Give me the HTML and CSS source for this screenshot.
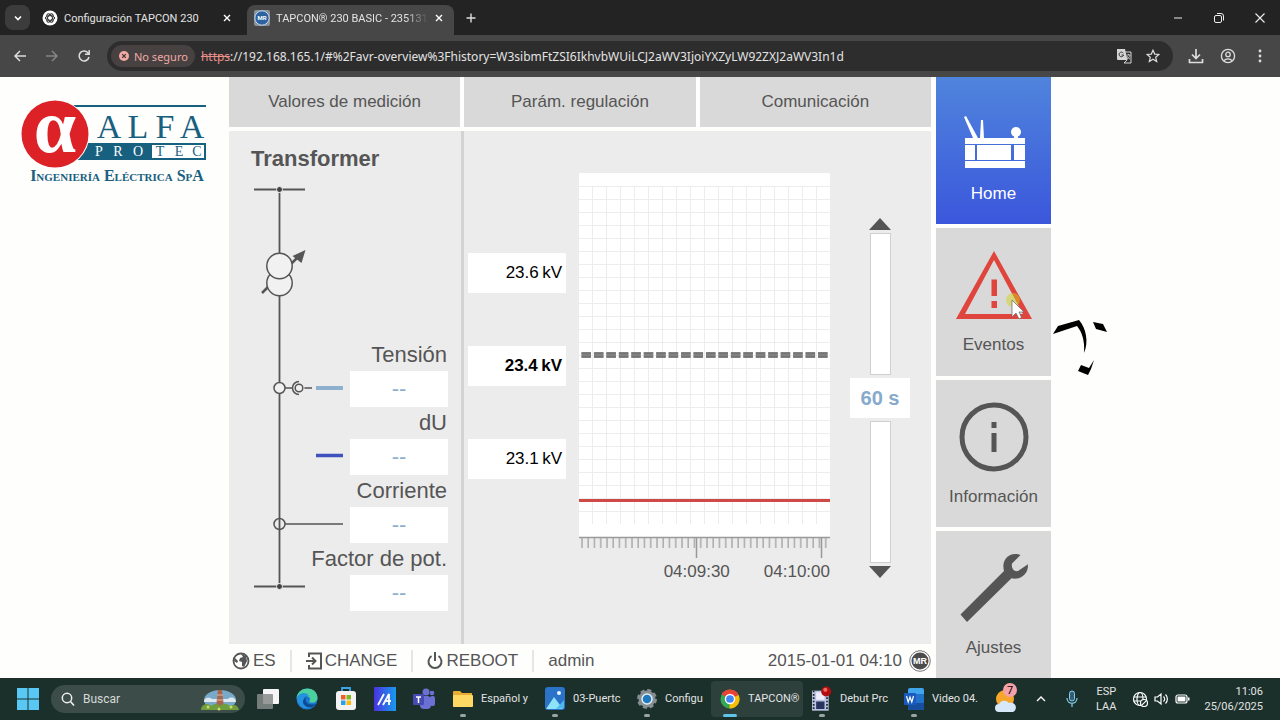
FILE: index.html
```html
<!DOCTYPE html>
<html lang="es">
<head>
<meta charset="utf-8">
<meta name="viewport" content="width=device-width, initial-scale=1">
<title>TAPCON 230 BASIC</title>
<link rel="stylesheet" href="styles.css">
</head>
<body>
<header class="browser">
<div class="tabstrip">
<button class="tabsearch" aria-label="Buscar pestañas"><svg width="10" height="10" viewBox="0 0 10 10"><path d="M2 3.5l3 3 3-3" fill="none" stroke="#fff" stroke-width="1.6"/></svg></button>
<div class="tab">
<svg width="16" height="16" viewBox="0 0 16 16"><circle cx="8" cy="8" r="7.5" fill="#fff"/><g fill="none" stroke="#333" stroke-width="1"><ellipse cx="8" cy="8" rx="4.6" ry="2.3"/><ellipse cx="8" cy="8" rx="4.6" ry="2.3" transform="rotate(60 8 8)"/><ellipse cx="8" cy="8" rx="4.6" ry="2.3" transform="rotate(120 8 8)"/></g></svg>
<span class="tabname">Configuración TAPCON 230</span>
<button aria-label="Cerrar"><svg width="10" height="10" viewBox="0 0 10 10"><path d="M2 2l6 6M8 2l-6 6" stroke="#fff" stroke-width="1.4"/></svg></button>
</div>
<div class="tab active">
<svg width="16" height="16" viewBox="0 0 16 16"><rect width="16" height="16" rx="2" fill="#8b9299"/><circle cx="8" cy="8" r="7.2" fill="#2d62a0" stroke="#c6d9ec"/><text x="8" y="10" text-anchor="middle" class="favtext">MR</text></svg>
<span class="tabname">TAPCON® 230 BASIC - 235131</span>
<button aria-label="Cerrar"><svg width="10" height="10" viewBox="0 0 10 10"><path d="M2 2l6 6M8 2l-6 6" stroke="#fff" stroke-width="1.4"/></svg></button>
</div>
<button class="newtab" aria-label="Nueva pestaña"><svg width="12" height="12" viewBox="0 0 12 12"><path d="M6 1.5v9M1.5 6h9" stroke="#ddd" stroke-width="1.4"/></svg></button>
<div class="winbuttons">
<button aria-label="Minimizar"><svg width="12" height="12" viewBox="0 0 12 12"><path d="M2 6h8" stroke="#eee"/></svg></button>
<button aria-label="Restaurar"><svg width="12" height="12" viewBox="0 0 12 12"><g fill="none" stroke="#eee"><rect x="1.5" y="3.5" width="7" height="7" rx="1.5"/><path d="M4 1.5h4a2.5 2.5 0 0 1 2.5 2.5v4.5"/></g></svg></button>
<button aria-label="Cerrar ventana"><svg width="12" height="12" viewBox="0 0 12 12"><path d="M1.5 1.5l9 9M10.5 1.5l-9 9" stroke="#eee" stroke-width="1.1"/></svg></button>
</div>
</div>
<div class="toolbar">
<button aria-label="Atrás"><svg width="14" height="14" viewBox="0 0 14 14"><path d="M13 7H2M7 2L2 7l5 5" fill="none" stroke="#ddd" stroke-width="1.5"/></svg></button>
<button aria-label="Adelante"><svg width="14" height="14" viewBox="0 0 14 14"><path d="M1 7h11M7 2l5 5-5 5" fill="none" stroke="#858585" stroke-width="1.5"/></svg></button>
<button aria-label="Recargar"><svg width="14" height="14" viewBox="0 0 14 14"><path d="M11.5 4.500A5 5 0 1 0 12 8M12.200 1v4.200H8" fill="none" stroke="#ddd" stroke-width="1.5"/></svg></button>
<div class="omnibox">
<span class="unsafe"><svg width="10" height="10" viewBox="0 0 10 10"><circle cx="5" cy="5" r="5" fill="#f0aaa4"/><path d="M3.2 3.2l3.6 3.6M6.8 3.2L3.2 6.8" stroke="#40302f" stroke-width="1.2"/></svg>No seguro</span>
<s>https</s><input type="text" aria-label="Dirección" value="://192.168.165.1/#%2Favr-overview%3Fhistory=W3sibmFtZSI6IkhvbWUiLCJ2aWV3IjoiYXZyLW92ZXJ2aWV3In1d">
<button aria-label="Traducir"><svg width="16" height="16" viewBox="0 0 16 16"><path d="M1 1h8l2.5 11H2a1 1 0 0 1-1-1z" fill="#d5d5d5"/><path d="M9.5 4H15v11H8l3-3" fill="none" stroke="#d5d5d5"/><path d="M7.3 5.2A2.3 2.3 0 1 0 7.6 7H5.5" fill="none" stroke="#333"/><path d="M10.5 7h4M12.5 6v1M14 7c-.5 2-1.5 3-3 4M11 8c.5 1.5 1.5 2.5 3 3" fill="none" stroke="#d5d5d5" stroke-width=".8"/></svg></button>
<button aria-label="Favorito"><svg width="14" height="14" viewBox="0 0 14 14"><path d="M7 1.2l1.7 3.9 4.2.4-3.2 2.8 1 4.2L7 10.3l-3.7 2.2 1-4.2L1.1 5.500l4.200-.4z" fill="none" stroke="#ddd" stroke-width="1.2"/></svg></button>
</div>
<button aria-label="Descargas"><svg width="16" height="16" viewBox="0 0 16 16"><path d="M8 1v9M4 6.5l4 4 4-4M1.5 11v3.5h13V11" fill="none" stroke="#ddd" stroke-width="1.7"/></svg></button>
<button aria-label="Perfil"><svg width="16" height="16" viewBox="0 0 16 16"><g fill="none" stroke="#ddd" stroke-width="1.3"><circle cx="8" cy="8" r="6.6"/><circle cx="8" cy="6.4" r="2.2"/><path d="M3.8 12.8c2-2.5 6.4-2.5 8.400 0"/></g></svg></button>
<button aria-label="Menú"><svg width="16" height="16" viewBox="0 0 16 16"><g fill="#ddd"><circle cx="8" cy="3" r="1.4"/><circle cx="8" cy="8" r="1.4"/><circle cx="8" cy="13" r="1.4"/></g></svg></button>
</div>
</header>

<main class="page">
<aside class="brand">
<svg class="logo" width="190" height="90" viewBox="18 96 190 90" role="img" aria-label="Alfa Protec Ingeniería Eléctrica SpA">
<path d="M70 106H206" stroke="#17607f" stroke-width="2"/>
<rect x="70" y="143" width="136" height="17" fill="#17607f"/>
<rect x="152" y="145" width="52" height="13" fill="#fff"/>
<circle cx="55" cy="134" r="34.5" fill="#fff"/>
<circle cx="55" cy="134" r="33.5" fill="#dc2127"/>
<text x="55" y="152" class="alpha">α</text>
<g class="alfa"><text x="109" y="138">A</text><text x="138" y="138">L</text><text x="165" y="138">F</text><text x="192" y="138">A</text></g>
<g class="pro"><text x="99" y="156">P</text><text x="118" y="156">R</text><text x="138" y="156">O</text></g>
<g class="tec"><text x="160" y="156">T</text><text x="179" y="156">E</text><text x="197" y="156">C</text></g>
<text x="117" y="181" class="slogan">Ingeniería Eléctrica SpA</text>
</svg>
</aside>

<div class="app">
<section class="visu">
<nav class="topnav">
<a href="#medicion">Valores de medición</a>
<a href="#regulacion">Parám. regulación</a>
<a href="#comunicacion">Comunicación</a>
</nav>
<div class="panels">
<div class="transformer">
<h1>Transformer</h1>
<div class="scheme">
<svg class="line" width="96" height="438" viewBox="250 173 96 438">
<g fill="none" stroke="#555" stroke-width="1.8">
<path d="M254 189.5h51M254 586.5h51"/>
<path d="M279.5 193v390"/>
<path d="M262 293l36-36" stroke-width="2.5"/>
</g>
<circle cx="279.5" cy="189.5" r="3" fill="#444" stroke="#ececec"/>
<circle cx="279.5" cy="586.5" r="3" fill="#444" stroke="#ececec"/>
<path d="M305.5 250l-4 13-9-7z" fill="#555"/>
<g fill="#f1f1f1" stroke="#555" stroke-width="1.5">
<circle cx="279.5" cy="283" r="12.7"/>
<circle cx="279.5" cy="266" r="12.7"/>
<path d="M285 388h27"/>
<circle cx="279.5" cy="388" r="5.5"/>
<circle cx="298.5" cy="388" r="6" fill="#ececec" stroke="none"/>
<path d="M299 381.5a6.5 6.5 0 0 0 0 13" fill="none"/>
<circle cx="299" cy="388" r="3.8"/>
<path d="M285 524h58"/>
<circle cx="279.5" cy="524" r="5.5" fill="none"/>
</g>
<path d="M316 388h27" stroke="#8cb0cd" stroke-width="4"/>
<path d="M316 455.5h27" stroke="#3e52bf" stroke-width="3.5"/>
</svg>
<dl class="readings">
<dt>Tensión</dt><dd>--</dd>
<dt>dU</dt><dd>--</dd>
<dt>Corriente</dt><dd>--</dd>
<dt>Factor de pot.</dt><dd>--</dd>
</dl>
</div>
</div>
<div class="trend">
<div class="levels">
<output>23.6&thinsp;kV</output>
<output class="target">23.4&thinsp;kV</output>
<output>23.1&thinsp;kV</output>
</div>
<div class="chart">
<svg viewBox="0 0 251 386">
<defs>
<pattern id="mesh" x="13" width="14" height="13" patternUnits="userSpaceOnUse"><path d="M.5 0v13M0 .5h14" stroke="#ededed" stroke-width="1"/></pattern>
<pattern id="ticks" x="2" width="6.25" height="10" patternUnits="userSpaceOnUse"><path d="M1 0v10" stroke="#aaa" stroke-width="1.5"/></pattern>
</defs>
<rect width="251" height="364" fill="#fff"/>
<rect y="13" width="251" height="338" fill="url(#mesh)"/>
<path d="M2.5 182h247" stroke="#8f8f8f" stroke-width="6" stroke-dasharray="9.5 2.95"/>
<path d="M2.5 180.500h247M2.5 183.5h247" stroke="#757575" stroke-width="2" stroke-dasharray="9.5 2.95"/>
<path d="M0 327.5h251" stroke="#cf4a46" stroke-width="3"/>
<path d="M0 364.5h251M117.5 364v21M242.5 364v21" stroke="#999" stroke-width="1.5" fill="none"/>
<rect y="365" width="251" height="10" fill="url(#ticks)"/>
</svg>
<div class="times"><span>04:09:30</span><span>04:10:00</span></div>
</div>
<div class="zoom">
<button aria-label="Ampliar"><svg width="22" height="12" viewBox="0 0 22 12"><path d="M0 12L11 0l11 12z" fill="#555"/></svg></button>
<div class="track"></div>
<output>60 s</output>
<div class="track"></div>
<button aria-label="Reducir"><svg width="22" height="12" viewBox="0 0 22 12"><path d="M0 0l11 12L22 0z" fill="#555"/></svg></button>
</div>
</div>
</div>
<footer class="status">
<button><svg width="18" height="18" viewBox="0 0 18 18"><circle cx="9" cy="9" r="7.5" fill="none" stroke="#555" stroke-width="1.8"/><path d="M9 2l5 2 1 5-3 6-2-1V10L7 9l1-3 3-1z" fill="#555"/><path d="M3 6l3 3-1 2-3-2z" fill="#555"/></svg>ES</button>
<button><svg width="16" height="18" viewBox="0 0 16 18"><path d="M3 5V1.5h12v15H3V13M0 9h9M6 5.5L9.500 9 6 12.500" fill="none" stroke="#555" stroke-width="2"/></svg>CHANGE</button>
<button><svg width="16" height="18" viewBox="0 0 16 18"><path d="M4.500 4a6.500 6.500 0 1 0 7 0M8 0v9" fill="none" stroke="#555" stroke-width="2"/></svg>REBOOT</button>
<span class="user">admin</span>
<time>2015-01-01 04:10</time>
<svg width="22" height="22" viewBox="0 0 22 22"><circle cx="11" cy="11" r="10.3" fill="#fff" stroke="#777"/><circle cx="11" cy="11" r="8.5" fill="#4c4c4c"/><text x="11" y="14" text-anchor="middle" class="mr">MR</text></svg>
</footer>
</section>

<nav class="sidenav">
<a href="#home" class="current"><svg width="80" height="80" viewBox="0 0 80 80"><g fill="#fff"><path d="M10 7l2-1 12 22h-5z"/><path d="M27 10h2l1 18h-4z"/><circle cx="62" cy="22" r="5"/><path d="M60 25h4v5h-4z"/><rect x="11" y="28" width="60" height="6"/><rect x="11" y="35" width="10" height="15"/><rect x="23" y="35" width="34" height="15"/><rect x="60" y="35" width="11" height="15"/><rect x="11" y="51" width="60" height="7"/></g></svg>Home</a>
<a href="#eventos"><svg width="80" height="80" viewBox="0 0 80 80"><path d="M40-4L2 64h76zM40 5L69 59H11z" fill="#df453c" fill-rule="evenodd"/><path d="M37.500 24.500H43V41h-5.500zM37.500 46H43v7h-5.500z" fill="#df453c"/></svg>Eventos
<span class="pointer"><svg width="24" height="30" viewBox="0 0 24 30"><circle cx="9" cy="8" r="7" fill="#d4d21c" opacity=".5"/><path d="M8 8v17l4-4 3 6 2.500-1.500-2.500-5.500h5z" fill="#fff" stroke="#666" stroke-width=".7"/></svg></span></a>
<a href="#informacion"><svg width="80" height="80" viewBox="0 0 80 80"><circle cx="40" cy="30" r="32" fill="none" stroke="#555" stroke-width="5"/><path d="M37.500 15h5v6h-5zM37.500 26h5v19h-5z" fill="#555"/></svg>Información</a>
<a href="#ajustes"><svg width="80" height="80" viewBox="0 0 80 80"><path d="M50 13C49 8 49 5 51.500 1 55-4 61-5 66.500-3L58 5.500c-1 4.500 2 8.500 6 7.500l10-6.700c0 4.700-1 7.700-3 9.700-3 4-9 5.500-13.500 4.300L13 64l-6.500-7.500z" fill="#555"/></svg>Ajustes</a>
</nav>
<svg class="sketch" width="58" height="58" viewBox="1052 319 58 58"><path d="M1053 334l5-8 21-6c7 8 10 22 5 33 1-12-2-21-7-27z"/><path d="M1093 322l10 2 4 8-11-3zM1081 365l8 3 5-8-3 9-3 6-10-4z"/></svg>
</div>
</main>

<footer class="taskbar">
<button class="start" aria-label="Inicio"><svg width="22" height="22" viewBox="0 0 22 22"><path d="M0 0h10.500v10.500H0zM11.500 0H22v10.500H11.500zM0 11.500h10.500V22H0zM11.500 11.500H22V22H11.500z" fill="#5ac8f5"/></svg></button>
<label class="search"><svg width="14" height="14" viewBox="0 0 14 14"><path d="M9.500 9.500L13 13.500" stroke="#eee" stroke-width="1.6"/><circle cx="6" cy="6" r="4.7" fill="none" stroke="#eee" stroke-width="1.5"/></svg>
<input type="text" placeholder="Buscar">
<svg width="40" height="28" viewBox="0 0 40 28"><ellipse cx="20" cy="15" rx="16" ry="10" fill="#79a9c8"/><path d="M4 17c0-5 6-5 8-3h16c3-3 8-1 8 3z" fill="#dfe9ef"/><path d="M16 23l2-18h4l2 18z" fill="#a7654e"/><path d="M17 10h6M16 15h8" stroke="#e1b6a0"/><path d="M1 25c0-6 7-8 10-4 4-3 7-2 9 0 3-3 7-3 9 0 5-2 9-1 10 4z" fill="#6f9e3c"/><g fill="#cfd86a"><circle cx="8" cy="22" r="1.5"/><circle cx="19" cy="24" r="1.5"/><circle cx="31" cy="22" r="1.5"/></g></svg></label>
<div class="pinned">
<button aria-label="Vista de tareas"><svg width="22" height="22" viewBox="0 0 22 22"><rect x="6" y="1" width="16" height="15" rx="1" fill="#f5f5f5"/><rect y="6" width="16" height="15" rx="1" fill="#858b89" opacity=".85"/></svg></button>
<button aria-label="Edge"><svg width="22" height="22" viewBox="0 0 22 22"><circle cx="11" cy="11" r="10.5" fill="#1a78cf"/><path d="M.5 10C2-2 20-3 21.500 9c.5 5-5 7-8.500 5 2-3 1-6-3-6-5 0-8 2-9.500 2z" fill="#4bd0a0"/><path d="M1 9c3-5 10-5 12-1-4-1-6 2-5 6 1 3 4 5 7 5-7 4-15-2-14-10z" fill="#2492df"/><path d="M10 9c-2 5 2 9 10 7-4 6-13 3-13-2 0-2 1-4 3-5z" fill="#0d4a96"/></svg></button>
<button aria-label="Store"><svg width="22" height="24" viewBox="0 0 22 24"><path d="M7 6V1h8v5" fill="none" stroke="#3aa5e8" stroke-width="1.8"/><rect x="1" y="4" width="20" height="19" rx="3" fill="#f3f3f3"/><path d="M6 8h4.500v4.500H6z" fill="#f15a2a"/><path d="M11.500 8H16v4.500h-4.500z" fill="#7dba1f"/><path d="M6 13.500h4.500V18H6z" fill="#2aa2e8"/><path d="M11.500 13.500H16V18h-4.500z" fill="#fcb813"/></svg></button>
<button aria-label="MyASUS"><svg width="22" height="24" viewBox="0 0 22 24"><defs><linearGradient id="asus" x2="1"><stop stop-color="#4a32e0"/><stop offset="1" stop-color="#189bee"/></linearGradient></defs><rect width="22" height="24" fill="url(#asus)"/><path d="M4 18L10 7M9 18l6-11v11M12 14h5" stroke="#fff" stroke-width="1.8" fill="none"/></svg></button>
<button aria-label="Teams"><svg width="22" height="22" viewBox="0 0 22 22"><g fill="#6b71d2"><circle cx="13" cy="4" r="3.5"/><circle cx="19" cy="5" r="2.3"/><rect x="7" y="8" width="11" height="13" rx="4"/><rect x="17" y="8" width="5" height="10" rx="2"/></g><rect y="6" width="11" height="11" rx="1" fill="#454bb0"/><path d="M3 9h5M5.500 9v6" stroke="#fff" stroke-width="1.5"/></svg></button>
</div>
<div class="running">
<button><svg width="20" height="20" viewBox="0 0 20 20"><path d="M0 3a1 1 0 0 1 1-1h6l2 2h10v14H1a1 1 0 0 1-1-1z" fill="#e9ac32"/><rect y="6" width="20" height="12" rx="1" fill="#ffd763"/></svg><span>Español y</span></button>
<button><svg width="20" height="24" viewBox="0 0 20 24"><rect width="20" height="23" rx="3" fill="#2b72c9"/><path d="M1 22l8-12 9 12z" fill="#8ce3fa"/><path d="M11 22l8-9v8z" fill="#4db8ee"/><circle cx="14" cy="6" r="2" fill="#eaf8ff"/></svg><span>03-Puertc</span></button>
<button class="short"><svg width="20" height="22" viewBox="0 0 20 22"><circle cx="10" cy="11" r="8.5" fill="#858e93" stroke="#858e93" stroke-width="3" stroke-dasharray="4 2.67"/><circle cx="10" cy="11" r="5" fill="#1d79c0" stroke="#e7edf0" stroke-width="1.5"/></svg><span>Configu</span></button>
<button class="active"><svg width="22" height="22" viewBox="0 0 22 22"><circle cx="11" cy="11" r="10.5" fill="#34a853"/><path d="M11 11L1.900 5.800A10.500 10.500 0 0 1 20.500 6.500z" fill="#ea4335"/><path d="M11 11l9.500-4.500A10.500 10.500 0 0 1 10.500 21.500z" fill="#fbbc05"/><circle cx="11" cy="11" r="5" fill="#4285f4" stroke="#fff" stroke-width="1.5"/></svg><span>TAPCON®</span></button>
<button><svg width="24" height="30" viewBox="0 0 24 30"><rect x="0" y="5" width="20" height="24" fill="#b9c4e3"/><path d="M2 5v24M18 5v24" stroke="#222" stroke-width="2" stroke-dasharray="2 2"/><rect x="5" y="7" width="10" height="9" fill="#eef"/><rect x="5" y="18" width="10" height="9" fill="#27345c"/><circle cx="17" cy="6" r="6" fill="#b30d10"/><circle cx="16" cy="4" r="2.5" fill="#ef6a62"/></svg><span>Debut Prc</span></button>
<button><svg width="20" height="22" viewBox="0 0 20 22"><rect x="4" width="16" height="22" rx="2" fill="#41a5ee"/><path d="M4 6h16v10H4z" fill="#2372c9"/><path d="M4 15h16v5a2 2 0 0 1-2 2H6a2 2 0 0 1-2-2z" fill="#164f9e"/><rect y="5" width="12" height="12" rx="1" fill="#185abd"/><path d="M2.500 8l1.700 6L6 9l1.800 5 1.700-6" stroke="#fff" stroke-width="1.2" fill="none"/></svg><span>Video 04.</span></button>
</div>
<button class="weather" aria-label="Tiempo"><svg width="24" height="32" viewBox="0 0 24 32"><circle cx="11" cy="16" r="9" fill="#f6a72b"/><path d="M5 29a4 4 0 0 1 0-8 6 6 0 0 1 10-1 4.500 4.500 0 0 1 4 9z" fill="#d7e8f8"/><circle cx="16" cy="7" r="7" fill="#f5a1a8"/><text x="16" y="11" text-anchor="middle" class="badge">7</text></svg></button>
<div class="tray">
<button aria-label="Iconos ocultos"><svg width="10" height="8" viewBox="0 0 10 8"><path d="M1 6l4-4 4 4" fill="none" stroke="#fff" stroke-width="1.4"/></svg></button>
<svg width="12" height="18" viewBox="0 0 12 18"><rect x="3.5" y="1" width="5" height="10" rx="2.5" fill="#315f78" stroke="#8dd0f3"/><path d="M1 8c0 7 10 7 10 0M6 13v4" fill="none" stroke="#8dd0f3" stroke-width="1.2"/></svg>
<span class="lang">ESP<br>LAA</span>
<svg class="net" width="58" height="16" viewBox="0 0 58 16"><g fill="none" stroke="#fff" stroke-width="1.2"><circle cx="8" cy="8" r="6.5"/><ellipse cx="8" cy="8" rx="3" ry="6.5"/><path d="M1.500 6h13M1.500 10h7"/><circle cx="12" cy="12" r="3.5" fill="#1b302b"/><path d="M9.800 14.200l4.400-4.400M23 6h2.500L29 3v10l-3.500-3H23zM31.500 5.500c1.500 1.500 1.500 3.500 0 5M33.500 3.500c2.500 2.500 2.500 6.500 0 9"/><rect x="44" y="4" width="11" height="8" rx="2"/></g><rect x="45.5" y="5.5" width="8" height="5" fill="#fff"/><path d="M56 6.500h1.500v3H56z" fill="#fff"/></svg>
<time>11:06<br>25/06/2025</time>
</div>
</footer>
</body>
</html>
```
FILE: styles.css
```css
* {
 box-sizing: border-box;
}
body {
 background: #fefefd;
 color: #555;
 display: flex;
 flex-direction: column;
 font-family: "Liberation Sans", Arial, sans-serif;
 font-size: 17px;
 margin: 0;
 min-height: 100vh;
}
button {
 align-items: center;
 background: none;
 border: 0;
 color: inherit;
 display: flex;
 font: inherit;
 justify-content: center;
 padding: 0;
}
input {
 background: none;
 border: 0;
 color: inherit;
 font: inherit;
 min-width: 0;
 padding: 0;
}
a {
 color: inherit;
 text-decoration: none;
}
svg {
 display: block;
 flex: none;
}

/* browser */
.browser, .taskbar {
 color: #e3e3e3;
 font-family: Roboto, "Noto Sans", sans-serif;
 font-size: 11px;
}
.tabstrip {
 align-items: flex-end;
 background: #232323;
 display: flex;
 height: 35px;
 padding-left: 5px;
}
.tabsearch {
 align-self: center;
 background: #3c3c3c;
 border-radius: 8px;
 height: 25px;
 width: 25px;
}
.tab {
 align-items: center;
 border-radius: 8px 8px 0 0;
 display: flex;
 gap: 6px;
 height: 30px;
 margin-left: 5px;
 padding: 0 10px 4px 7px;
 width: 207px;
}
.tab.active {
 background: #474747;
}
.tabname {
 flex: 1;
 white-space: nowrap;
}
.active .tabname {
 -webkit-mask-image: linear-gradient(to right, #000 85%, transparent);
 mask-image: linear-gradient(to right, #000 85%, transparent);
}
.favtext {
 fill: #fff;
 font-size: 6px;
 font-weight: bold;
}
.newtab {
 height: 35px;
 margin-left: 5px;
 width: 24px;
}
.winbuttons {
 display: flex;
 margin-left: auto;
}
.winbuttons button {
 height: 35px;
 width: 41px;
}
.toolbar {
 align-items: center;
 background: #474747;
 display: flex;
 height: 42px;
 padding: 0 4px;
}
.toolbar button {
 height: 30px;
 width: 32px;
}
.omnibox {
 align-items: center;
 background: #2d2d2d;
 border-radius: 15px;
 display: flex;
 flex: 1;
 font-family: "Noto Sans", "Open Sans", sans-serif;
 font-size: 12px;
 height: 30px;
 margin: 0 7px;
 padding: 0 6px 0 4px;
}
.omnibox button {
 width: 29px;
}
.omnibox input {
 flex: 1;
}
.omnibox s {
 color: #e98f88;
}
.unsafe {
 align-items: center;
 background: #474141;
 border-radius: 11px;
 color: #f0aaa4;
 display: flex;
 font-size: 11px;
 gap: 5px;
 height: 22px;
 margin-right: 6px;
 padding: 0 7px 0 8px;
}

/* page */
.page {
 display: grid;
 flex: 1;
 grid-template-columns: 229fr 822fr 229fr;
}
.brand {
 padding: 19px 0 0 18px;
}
.logo {
 overflow: visible;
}
.logo text {
 fill: #17607f;
 font-family: "Liberation Serif", serif;
 text-anchor: middle;
}
.logo .alpha {
 fill: #fff;
 font-size: 76px;
 font-weight: bold;
}
.alfa {
 font-size: 34px;
}
.pro, .tec {
 font-size: 14px;
}
.logo .pro text {
 fill: #fff;
}
.logo .slogan {
 font-size: 16px;
 font-variant: small-caps;
 font-weight: bold;
}
.app {
 display: flex;
 gap: 5px;
 position: relative;
}
.visu {
 display: flex;
 flex: 1;
 flex-direction: column;
}
.topnav {
 display: grid;
 gap: 4px;
 grid-template-columns: 1fr 1fr 1fr;
}
.topnav a {
 background: #d9d9d9;
 line-height: 50px;
 text-align: center;
}
.panels {
 background: #ececec;
 display: flex;
 flex: 1;
 margin-top: 4px;
}
.transformer {
 border-right: 3px solid #d3d3d3;
 padding: 14px 13px 0 21px;
 width: 235px;
}
h1 {
 font-size: 22px;
 line-height: 28px;
 margin: 0 0 0 1px;
}
.scheme {
 display: grid;
}
.line, .readings {
 grid-area: 1 / 1;
}
.readings {
 align-self: end;
 font-size: 22px;
 justify-self: end;
 margin: 0;
 text-align: right;
}
.readings dt {
 line-height: 32px;
 padding-right: 1px;
}
.readings dd {
 background: #fff;
 color: #8cb0cd;
 height: 36px;
 line-height: 36px;
 margin: 0 0 0 auto;
 text-align: center;
 width: 98px;
}
.trend {
 display: flex;
 flex: 1;
 padding: 42px 21px 0 4px;
}
.levels {
 color: #000;
 display: flex;
 flex-direction: column;
 gap: 53px;
 margin: 80px 13px 0 0;
 width: 98px;
}
.levels output {
 background: #fff;
 line-height: 40px;
 padding-right: 4px;
 text-align: right;
}
.target {
 font-weight: bold;
}
.chart {
 flex: 1;
}
.chart svg {
 width: 100%;
}
.times {
 display: flex;
 gap: 34px;
 justify-content: flex-end;
 line-height: 26px;
}
.zoom {
 align-items: center;
 display: flex;
 flex-direction: column;
 gap: 3px;
 margin: 45px 0 0 20px;
 width: 60px;
}
.track {
 background: #fff;
 border: 1px solid #cfcfcf;
 height: 142px;
 width: 21px;
}
.zoom output {
 background: #fff;
 color: #86aacb;
 font-size: 20px;
 font-weight: bold;
 line-height: 40px;
 text-align: center;
 width: 100%;
}
.status {
 align-items: center;
 display: flex;
 height: 34px;
 padding-left: 3px;
}
.status button {
 border-right: 2px solid #e6e6e6;
 gap: 3px;
 height: 22px;
 margin-right: 14px;
 padding-right: 14px;
}
.status time {
 margin: 0 7px 0 auto;
}
.mr {
 fill: #fff;
 font-size: 9px;
 font-weight: bold;
}
.sidenav {
 display: grid;
 gap: 4px;
 grid-auto-rows: 1fr;
 width: 115px;
}
.sidenav a {
 align-items: center;
 background: #d9d9d9;
 display: flex;
 flex-direction: column;
 line-height: 20px;
 padding-top: 27px;
 position: relative;
}
.sidenav a > svg {
 overflow: visible;
}
.sidenav .current {
 background: linear-gradient(#4f84dc, #3b57dc);
 color: #fff;
 padding-top: 33px;
}
.sidenav .current svg {
 margin-bottom: -6px;
}
.pointer {
 left: 68px;
 position: absolute;
 top: 64px;
}
.sketch {
 left: 823px;
 position: absolute;
 top: 242px;
}

/* taskbar */
.taskbar {
 align-items: center;
 background: #1b302b;
 display: flex;
 height: 42px;
 line-height: 14px;
 padding: 0 17px;
}
.search {
 align-items: center;
 background: #3c4d49;
 border-radius: 14px;
 display: flex;
 font-size: 12px;
 gap: 8px;
 height: 28px;
 margin: 0 3px 0 12px;
 padding: 0 5px 0 10px;
 width: 194px;
}
.search input {
 flex: 1;
}
.search input::placeholder {
 color: #d5dad8;
}
.pinned, .running {
 display: flex;
}
.pinned button {
 width: 39px;
}
.running {
 margin-left: 1px;
}
.running button {
 gap: 8px;
 height: 36px;
 padding: 0 8px 0 9px;
 position: relative;
}
.running svg {
 width: 20px;
}
.running button::after {
 background: #9aa5a2;
 border-radius: 2px;
 bottom: 0;
 content: "";
 height: 3px;
 left: 16px;
 position: absolute;
 width: 6px;
}
.running .active {
 background: #2d403c;
 border-radius: 4px;
}
.running .active::after {
 background: #5fc3ea;
 left: 12px;
 width: 14px;
}
.running span {
 text-align: left;
 white-space: nowrap;
 width: 47px;
}
.running .short span {
 width: 38px;
}
.weather {
 margin-left: 7px;
}
.badge {
 font-size: 11px;
}
.tray {
 align-items: center;
 display: flex;
 line-height: 15px;
 margin-left: auto;
 text-align: right;
}
.tray > button {
 margin-right: 20px;
}
.lang {
 margin: 0 16px 0 18px;
 text-align: center;
}
.net {
 margin-right: 14px;
}
```
